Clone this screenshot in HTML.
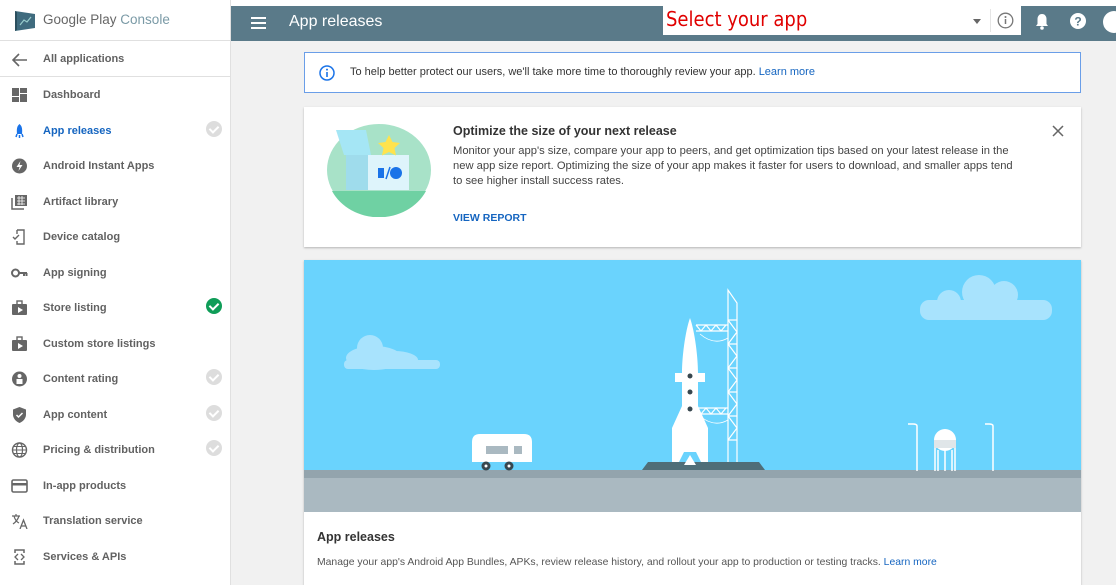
<!DOCTYPE html>
<html><head><meta charset="utf-8"><style>
*{box-sizing:border-box;margin:0;padding:0}
body{width:1120px;height:585px;overflow:hidden;background:#fff;font-family:"Liberation Sans",Arial,sans-serif;position:relative}
#side{position:absolute;left:0;top:0;width:231px;height:585px;background:#fff;border-right:1px solid #e0e0e0}
.logo{height:41px;border-bottom:1px solid #e0e0e0;position:relative}
.logo span{position:absolute;left:43px;top:12px;font-size:13.5px;color:#666}
.logo span b{font-weight:normal;color:#7a9aa6}
.back{height:36px;border-bottom:1px solid #e0e0e0;position:relative}
.item{position:absolute;left:0;width:231px;height:20px}
.item .t{position:absolute;left:43px;top:4px;font-size:11px;font-weight:bold;color:#616161}
.item .ic{position:absolute;left:11px;top:2px;width:17px;height:16px}
.chk{position:absolute;left:206px;top:0px;width:16px;height:16px;border-radius:50%;background:#ddd}
.chk::after{content:"";position:absolute;left:5px;top:3px;width:4px;height:7px;border:solid #fff;border-width:0 2px 2px 0;transform:rotate(45deg)}
.chk.g{background:#0f9d58}
#main{position:absolute;left:231px;top:41px;width:885px;height:544px;background:#f1f1f1}
#top{position:absolute;left:231px;top:6px;width:885px;height:35px;background:#5a7a89}
.card{position:absolute;background:#fff;box-shadow:0 1px 2px rgba(0,0,0,.25)}
</style></head><body>
<div id="side">
 <div class="logo">
  <svg style="position:absolute;left:14px;top:10px" width="22" height="22" viewBox="0 0 22 22"><path d="M1 1 L21 4 L21 18 L1 21Z" fill="#3f6b7e"/><path d="M3 2 L3 20 L1 21 L1 1Z" fill="#2b4f5e"/><path d="M6 15 L10 10 L13 12 L17 7" stroke="#9cc" stroke-width="1.2" fill="none"/></svg>
  <span>Google Play <b>Console</b></span>
 </div>
 <div class="back"><svg style="position:absolute;left:12px;top:12px" width="16" height="14" viewBox="0 0 16 14"><path d="M15 7H2M7 1L1 7l6 6" stroke="#666" stroke-width="1.6" fill="none"/></svg><span style="position:absolute;left:43px;top:12px;font-size:11px;font-weight:bold;color:#616161">All applications</span></div>
 <div class="item" style="top:85px"><svg class="ic" viewBox="0 0 17 16"><rect x="1" y="1" width="7" height="8" fill="#666"/><rect x="9" y="1" width="7" height="5" fill="#666"/><rect x="1" y="10" width="7" height="5" fill="#666"/><rect x="9" y="7" width="7" height="8" fill="#666"/></svg><span class="t">Dashboard</span></div>
 <div class="item" style="top:121px"><svg class="ic" viewBox="0 0 17 16"><path d="M8.5 1C6 3 5.5 6 6 11h5c.5-5 0-8-2.5-10z" fill="#1a73e8"/><path d="M5 14l1-3M12 14l-1-3M8.5 15v-3" stroke="#1a73e8" stroke-width="1.5"/></svg><span class="t" style="color:#1565c0">App releases</span><div class="chk"></div></div>
 <div class="item" style="top:156px"><svg class="ic" viewBox="0 0 17 16"><circle cx="8.5" cy="8" r="7.5" fill="#666"/><path d="M9.5 3L5.5 9h3l-1 4 4-6h-3z" fill="#fff"/></svg><span class="t">Android Instant Apps</span></div>
 <div class="item" style="top:192px"><svg class="ic" viewBox="0 0 17 16"><rect x="4" y="1" width="12" height="11" fill="#666"/><path d="M1 4v11h12" stroke="#666" stroke-width="1.5" fill="none"/><path d="M6 4h8M6 7h8M6 10h8M8 2v9M11 2v9" stroke="#fff" stroke-width=".8"/></svg><span class="t">Artifact library</span></div>
 <div class="item" style="top:227px"><svg class="ic" viewBox="0 0 17 16"><path d="M6 1h7v14H6v-3M6 5V1" stroke="#666" stroke-width="1.4" fill="none"/><path d="M2 8l2 2 4-4" stroke="#666" stroke-width="1.4" fill="none"/></svg><span class="t">Device catalog</span></div>
 <div class="item" style="top:263px"><svg class="ic" viewBox="0 0 17 16"><circle cx="4.5" cy="8" r="3.5" fill="none" stroke="#666" stroke-width="2"/><path d="M8 8h8M13 8v3M15.5 8v3" stroke="#666" stroke-width="2"/></svg><span class="t">App signing</span></div>
 <div class="item" style="top:298px"><svg class="ic" viewBox="0 0 17 16"><rect x="1" y="4" width="15" height="11" rx="1" fill="#666"/><rect x="6" y="1" width="5" height="4" fill="none" stroke="#666" stroke-width="1.4"/><path d="M7 7v6l5-3z" fill="#fff"/></svg><span class="t">Store listing</span><div class="chk g"></div></div>
 <div class="item" style="top:334px"><svg class="ic" viewBox="0 0 17 16"><rect x="1" y="4" width="15" height="11" rx="1" fill="#666"/><rect x="6" y="1" width="5" height="4" fill="none" stroke="#666" stroke-width="1.4"/><path d="M7 7v6l5-3z" fill="#fff"/></svg><span class="t">Custom store listings</span></div>
 <div class="item" style="top:369px"><svg class="ic" viewBox="0 0 17 16"><circle cx="8.5" cy="8" r="7.5" fill="#666"/><circle cx="8.5" cy="5" r="2" fill="#fff"/><rect x="5.5" y="8" width="6" height="5" fill="#fff"/></svg><span class="t">Content rating</span><div class="chk"></div></div>
 <div class="item" style="top:405px"><svg class="ic" viewBox="0 0 17 16"><path d="M8.5 0L2 2.5v5C2 11.5 5 14.5 8.5 16 12 14.5 15 11.5 15 7.5v-5z" fill="#666"/><path d="M5.5 8l2 2 4-4" stroke="#fff" stroke-width="1.5" fill="none"/></svg><span class="t">App content</span><div class="chk"></div></div>
 <div class="item" style="top:440px"><svg class="ic" viewBox="0 0 17 16"><circle cx="8.5" cy="8" r="7" fill="none" stroke="#666" stroke-width="1.4"/><ellipse cx="8.5" cy="8" rx="3" ry="7" fill="none" stroke="#666" stroke-width="1.2"/><path d="M1.5 8h14M2.5 4.5h12M2.5 11.5h12" stroke="#666" stroke-width="1.1"/></svg><span class="t">Pricing &amp; distribution</span><div class="chk"></div></div>
 <div class="item" style="top:476px"><svg class="ic" viewBox="0 0 17 16"><rect x="1" y="2" width="15" height="12" rx="1.5" fill="none" stroke="#666" stroke-width="1.6"/><rect x="1" y="5" width="15" height="2.5" fill="#666"/></svg><span class="t">In-app products</span></div>
 <div class="item" style="top:511px"><svg class="ic" viewBox="0 0 17 16"><path d="M1 3h8M5 1v2M3 3c1 4 3 6 5 7M8 3c-1 3-3 6-6 8" stroke="#666" stroke-width="1.2" fill="none"/><path d="M9 16l3.5-9 3.5 9M10.5 13h4" stroke="#666" stroke-width="1.3" fill="none"/></svg><span class="t">Translation service</span></div>
 <div class="item" style="top:547px"><svg class="ic" viewBox="0 0 17 16"><path d="M4 4V1h9v3M4 12v3h9v-3" stroke="#666" stroke-width="1.5" fill="none"/><path d="M7 5L4 8l3 3M10 5l3 3-3 3" stroke="#666" stroke-width="1.3" fill="none"/></svg><span class="t">Services &amp; APIs</span></div>
</div>
<div id="main"></div>
<div id="top">
 <svg style="position:absolute;left:20px;top:11px" width="15" height="12" viewBox="0 0 15 12"><path d="M0 1h15M0 6h15M0 11h15" stroke="#fff" stroke-width="2"/></svg>
 <span style="position:absolute;left:58px;top:7px;font-size:16px;color:#fff">App releases</span>
 <div style="position:absolute;left:432px;top:0;width:358px;height:29px;background:#fff">
  <span style="position:absolute;left:3px;top:1px;font-size:20px;color:#e00000;font-family:'DejaVu Sans Condensed','Liberation Sans Narrow','Liberation Sans',sans-serif">Select your app</span>
  <div style="position:absolute;left:310px;top:13px;border:4px solid transparent;border-top:5px solid #666"></div>
  <div style="position:absolute;left:327px;top:3px;width:1px;height:23px;background:#e5e5e5"></div>
  <svg style="position:absolute;left:334px;top:6px" width="17" height="17" viewBox="0 0 17 17"><circle cx="8.5" cy="8.5" r="7.3" fill="none" stroke="#777" stroke-width="1.3"/><path d="M8.5 7v5" stroke="#777" stroke-width="1.5"/><circle cx="8.5" cy="5" r="1" fill="#777"/></svg>
 </div>
 <svg style="position:absolute;left:803px;top:7px" width="16" height="18" viewBox="0 0 16 18"><path d="M8 1c-3 0-4.5 2.5-4.5 5v5L2 13h12l-1.5-2V6C12.5 3.5 11 1 8 1z" fill="#fff"/><circle cx="8" cy="15" r="1.8" fill="#fff"/></svg>
 <svg style="position:absolute;left:838px;top:6px" width="18" height="18" viewBox="0 0 18 18"><circle cx="9" cy="9" r="8" fill="#fff"/><text x="9" y="13.5" font-size="12" font-weight="bold" text-anchor="middle" fill="#5a7a89" font-family="Liberation Sans">?</text></svg>
 <div style="position:absolute;left:872px;top:5px;width:22px;height:22px;border-radius:50%;background:#fff"></div>
</div>
<div class="card" style="left:304px;top:52px;width:777px;height:41px;border:1.5px solid #6a9ee8;box-shadow:none">
 <svg style="position:absolute;left:14px;top:12px" width="16" height="16" viewBox="0 0 16 16"><circle cx="8" cy="8" r="7" fill="none" stroke="#1a73e8" stroke-width="1.5"/><path d="M8 7v5" stroke="#1a73e8" stroke-width="1.6"/><circle cx="8" cy="4.6" r="1" fill="#1a73e8"/></svg>
 <span style="position:absolute;left:45px;top:13px;font-size:11px;color:#333">To help better protect our users, we'll take more time to thoroughly review your app. <span style="color:#1565c0">Learn more</span></span>
</div>
<div class="card" style="left:304px;top:107px;width:777px;height:140px">
 <svg style="position:absolute;left:22px;top:16px" width="106" height="94" viewBox="0 0 106 94"><ellipse cx="53" cy="47" rx="52" ry="46" fill="#a8e2c8"/><path d="M6 68h94a52 46 0 0 1-94 0z" fill="#6fd1a3"/><path d="M10 7h30l5 25H18z" fill="#a5e6f5"/><rect x="20" y="32" width="22" height="35" fill="#9fdcec"/><rect x="42" y="32" width="41" height="35" fill="#def4fb"/><path d="M63 12l3.5 7 7.5 1-5.5 5 1.5 7.5-7-3.5-7 3.5 1.5-7.5-5.5-5 7.5-1z" fill="#ffe34d"/><rect x="52" y="45" width="6" height="10" fill="#1a73e8"/><circle cx="70" cy="50" r="6" fill="#1a73e8"/><path d="M60 56l4-12" stroke="#1a73e8" stroke-width="1.5"/></svg>
 <div style="position:absolute;left:149px;top:17px;font-size:12.5px;font-weight:bold;color:#333">Optimize the size of your next release</div>
 <div style="position:absolute;left:149px;top:37px;width:572px;font-size:11.2px;line-height:15px;color:#444">Monitor your app's size, compare your app to peers, and get optimization tips based on your latest release in the new app size report. Optimizing the size of your app makes it faster for users to download, and smaller apps tend to see higher install success rates.</div>
 <div style="position:absolute;left:149px;top:105px;font-size:10.5px;font-weight:bold;color:#1565c0">VIEW REPORT</div>
 <svg style="position:absolute;left:748px;top:18px" width="12" height="12" viewBox="0 0 12 12"><path d="M1 1l10 10M11 1L1 11" stroke="#666" stroke-width="1.5"/></svg>
</div>
<div class="card" style="left:304px;top:260px;width:777px;height:325px">
 <svg style="position:absolute;left:0;top:0" width="777" height="252" viewBox="0 0 777 252">
  <rect width="777" height="252" fill="#6ad3fd"/>
  <rect y="210" width="777" height="42" fill="#aab9c1"/>
  <rect y="210" width="777" height="8" fill="#93a4ad"/>
  <g fill="#a8e3fd"><ellipse cx="70" cy="98" rx="28" ry="12"/><circle cx="66" cy="88" r="13"/><ellipse cx="90" cy="100" rx="24" ry="9"/><rect x="40" y="100" width="96" height="9" rx="4"/>
  <circle cx="675" cy="32" r="17"/><circle cx="700" cy="35" r="14"/><circle cx="645" cy="42" r="12"/><rect x="616" y="40" width="132" height="20" rx="9"/></g>
  <path d="M338 210l6-8h111l6 8z" fill="#4f6e78"/>
  <g stroke="#fff" stroke-width="1.2" fill="none"><path d="M424 202V30l9 13v159M433 43v159M424 202"/>
  <path d="M424 60l9 12-9 12 9 12-9 12 9 12-9 12 9 12-9 12 9 12-9 12M424 60h9M424 84h9M424 108h9M424 132h9M424 156h9M424 180h9"/>
  <path d="M392 65h32M392 71h32M392 65l5 6 5-6 5 6 5-6 5 6 5-6M392 148h32M392 154h32M392 148l5 6 5-6 5 6 5-6 5 6 5-6"/>
  <path d="M396 74q14 12 28 4M396 156q14 12 28 4" stroke-width=".8"/></g>
  <path d="M386 58c-5 14-8 40-8 55v33l-10 22v34h7l5-10h12l5 10h7v-34l-10-22v-33c0-15-3-41-8-55z" fill="#fff"/>
  <rect x="371" y="113" width="30" height="9" fill="#fff"/>
  <path d="M380 205l6-10 6 10z" fill="#fff"/>
  <g fill="#37474f"><circle cx="386" cy="116" r="2.5"/><circle cx="386" cy="132" r="2.5"/><circle cx="386" cy="149" r="2.5"/></g>
  <path d="M168 182q0-8 8-8h44q8 0 8 8v20h-60z" fill="#fff"/><rect x="182" y="186" width="22" height="8" fill="#aab9c1"/><rect x="210" y="186" width="8" height="8" fill="#aab9c1"/>
  <circle cx="182" cy="206" r="4.5" fill="#37474f"/><circle cx="182" cy="206" r="1.5" fill="#fff"/><circle cx="205" cy="206" r="4.5" fill="#37474f"/><circle cx="205" cy="206" r="1.5" fill="#fff"/>
  <g stroke="#fff" stroke-width="1.5" fill="none"><path d="M613 211v-45q0-2-4-2h-5M689 211v-45q0-2-4-2h-4M634 190v21M641 190v21M648 190v21M631 185v26M651 185v26"/></g>
  <circle cx="641" cy="180" r="11" fill="#fff"/><rect x="630" y="180" width="22" height="8" fill="#e0e6e9"/>
 </svg>
 <div style="position:absolute;left:13px;top:270px;font-size:12.5px;font-weight:bold;color:#333">App releases</div>
 <div style="position:absolute;left:13px;top:297px;font-size:10.4px;color:#555">Manage your app's Android App Bundles, APKs, review release history, and rollout your app to production or testing tracks. <span style="color:#1565c0">Learn more</span></div>
</div>
</body></html>
